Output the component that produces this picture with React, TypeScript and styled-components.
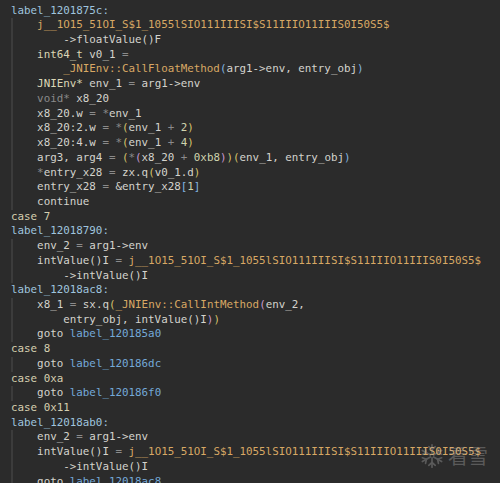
import React from "react";
import styled, { createGlobalStyle } from "styled-components";

const Global = createGlobalStyle`
  html, body { margin: 0; padding: 0; background: #2b2b2b; }
  body { width: 500px; height: 483px; overflow: hidden; }
`;

const Editor = styled.div`
  position: relative;
  width: 500px;
  height: 483px;
  overflow: hidden;
  box-sizing: border-box;
  padding: 3.6px 0 0 11px;
  background: #2b2b2b;
  font-family: "DejaVu Sans Mono", "Liberation Mono", monospace;
  font-size: 10.85px;
  line-height: 14.73px;
  color: #d4d3cd;
`;

const Line = styled.div`
  display: flex;
  height: 14.73px;
  white-space: pre;
`;

const Guide = styled.span`
  flex: none;
  width: 4ch;
  box-sizing: border-box;
  border-left: 2px solid #3c3c3c;
`;

const Pad = styled.span`
  flex: none;
  width: 4ch;
`;

type Kind = "t" | "lbl" | "tgt" | "fn" | "op" | "kw" | "ty" | "cs" | "num" | "p1" | "p2" | "p3";

const colors: Record<Kind, string> = {
  t: "#d4d3cd",
  lbl: "#9fc4de",
  tgt: "#74a9d8",
  fn: "#d8a864",
  op: "#8b8b8b",
  kw: "#8a8a8a",
  ty: "#dbd6b6",
  cs: "#d5cfb0",
  num: "#cfd4ae",
  p1: "#d7c36c",
  p2: "#c99ad2",
  p3: "#83b6e0",
};

const Tok = styled.span<{ $k: Kind }>`
  color: ${(p) => colors[p.$k]};
`;

const Watermark = styled.div`
  position: absolute;
  right: 12px;
  bottom: 13px;
  display: flex;
  align-items: center;
  gap: 3px;
  opacity: 0.32;
  pointer-events: none;
`;

const WmText = styled.span`
  font-family: "Noto Sans CJK SC", sans-serif;
  font-size: 20px;
  line-height: 22px;
  color: #bdbdbd;
  letter-spacing: 0px;
`;

type T = [Kind, string];
type L = { i: number; toks: T[] };

const J = "j__1O15_51OI_S$1_1055lSIO111IIISI$S11IIIO11IIIS0I50S5$";

const lines: L[] = [
  { i: 0, toks: [["lbl", "label_1201875c:"]] },
  { i: 1, toks: [["fn", J]] },
  { i: 2, toks: [["t", "->floatValue()F"]] },
  { i: 1, toks: [["ty", "int64_t"], ["t", " v0_1 "], ["op", "="]] },
  { i: 2, toks: [["fn", "_JNIEnv::CallFloatMethod"], ["p3", "("], ["t", "arg1->env, entry_obj"], ["p3", ")"]] },
  { i: 1, toks: [["ty", "JNIEnv*"], ["t", " env_1 "], ["op", "="], ["t", " arg1->env"]] },
  { i: 1, toks: [["kw", "void*"], ["t", " x8_20"]] },
  { i: 1, toks: [["t", "x8_20.w "], ["op", "= *"], ["t", "env_1"]] },
  { i: 1, toks: [["t", "x8_20:2.w "], ["op", "= *"], ["p1", "("], ["t", "env_1 "], ["op", "+"], ["num", " 2"], ["p1", ")"]] },
  { i: 1, toks: [["t", "x8_20:4.w "], ["op", "= *"], ["p1", "("], ["t", "env_1 "], ["op", "+"], ["num", " 4"], ["p1", ")"]] },
  { i: 1, toks: [["t", "arg3, arg4 "], ["op", "= "], ["p1", "("], ["op", "*"], ["p2", "("], ["t", "x8_20 "], ["op", "+"], ["num", " 0xb8"], ["p2", ")"], ["p1", ")"], ["p1", "("], ["t", "env_1, entry_obj"], ["p3", ")"]] },
  { i: 1, toks: [["op", "*"], ["t", "entry_x28 "], ["op", "="], ["t", " zx.q"], ["p1", "("], ["t", "v0_1.d"], ["p1", ")"]] },
  { i: 1, toks: [["t", "entry_x28 "], ["op", "="], ["t", " &entry_x28"], ["p3", "["], ["num", "1"], ["p3", "]"]] },
  { i: 1, toks: [["t", "continue"]] },
  { i: 0, toks: [["cs", "case 7"]] },
  { i: 0, toks: [["lbl", "label_12018790:"]] },
  { i: 1, toks: [["t", "env_2 "], ["op", "="], ["t", " arg1->env"]] },
  { i: 1, toks: [["t", "intValue()I "], ["op", "="], ["t", " "], ["fn", J]] },
  { i: 2, toks: [["t", "->intValue()I"]] },
  { i: 0, toks: [["lbl", "label_12018ac8:"]] },
  { i: 1, toks: [["t", "x8_1 "], ["op", "="], ["t", " sx.q"], ["p1", "("], ["fn", "_JNIEnv::CallIntMethod"], ["p2", "("], ["t", "env_2,"]] },
  { i: 2, toks: [["t", "entry_obj, intValue()I"], ["p2", ")"], ["p1", ")"]] },
  { i: 1, toks: [["t", "goto "], ["tgt", "label_120185a0"]] },
  { i: 0, toks: [["cs", "case 8"]] },
  { i: 1, toks: [["t", "goto "], ["tgt", "label_120186dc"]] },
  { i: 0, toks: [["cs", "case 0xa"]] },
  { i: 1, toks: [["t", "goto "], ["tgt", "label_120186f0"]] },
  { i: 0, toks: [["cs", "case 0x11"]] },
  { i: 0, toks: [["lbl", "label_12018ab0:"]] },
  { i: 1, toks: [["t", "env_2 "], ["op", "="], ["t", " arg1->env"]] },
  { i: 1, toks: [["t", "intValue()I "], ["op", "="], ["t", " "], ["fn", J]] },
  { i: 2, toks: [["t", "->intValue()I"]] },
  { i: 1, toks: [["t", "goto "], ["tgt", "label_12018ac8"]] },
];

function Snowflake() {
  const arms = [0, 60, 120, 180, 240, 300];
  return (
    <svg width="26" height="28" viewBox="-14 -14 28 28">
      <g stroke="#bdbdbd" strokeWidth="1.8" strokeLinecap="round" fill="none">
        {arms.map((a) => (
          <g key={a} transform={`rotate(${a})`}>
            <line x1="0" y1="-2" x2="0" y2="-12" />
            <line x1="0" y1="-7" x2="-3.5" y2="-10" />
            <line x1="0" y1="-7" x2="3.5" y2="-10" />
          </g>
        ))}
      </g>
    </svg>
  );
}

export default function App() {
  return (
    <>
      <Global />
      <Editor>
        {lines.map((l, idx) => (
          <Line key={idx}>
            {l.i >= 1 && <Guide />}
            {l.i >= 2 && <Pad />}
            {l.toks.map(([k, s], j) => (
              <Tok key={j} $k={k}>
                {s}
              </Tok>
            ))}
          </Line>
        ))}
        <Watermark>
          <Snowflake />
          <WmText>看雪</WmText>
        </Watermark>
      </Editor>
    </>
  );
}
